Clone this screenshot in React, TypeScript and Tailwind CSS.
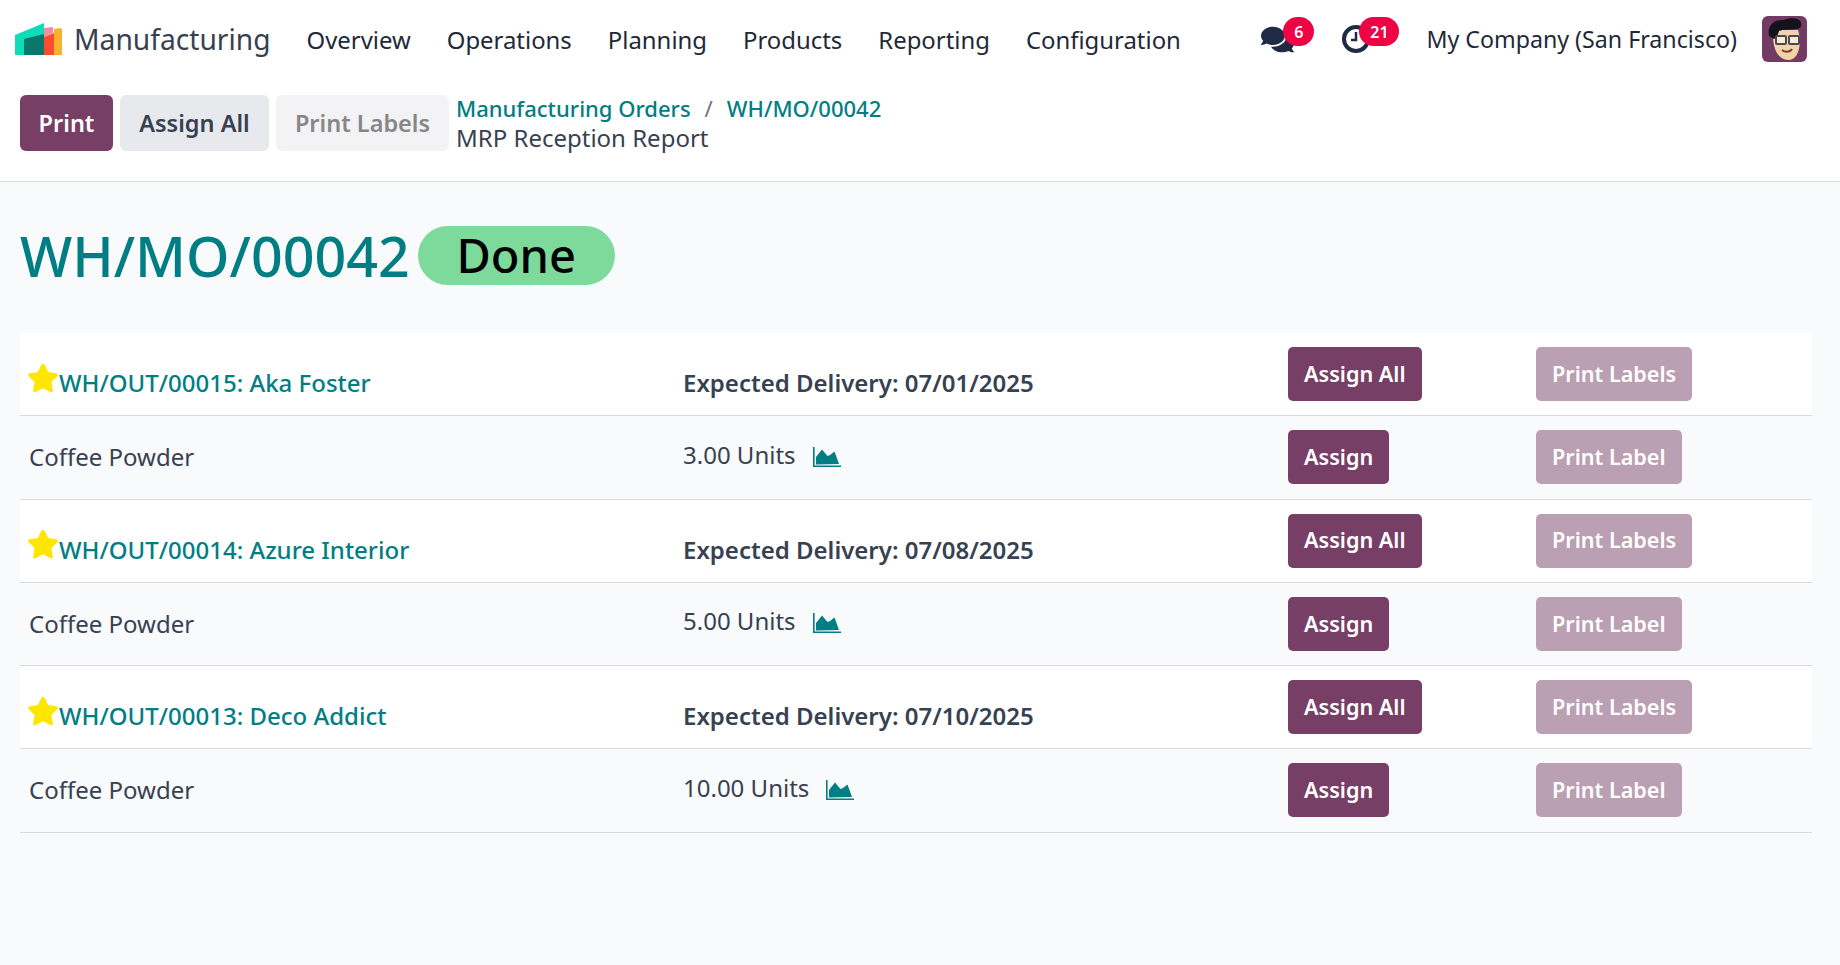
import { FaComments, FaStar } from 'react-icons/fa';

const font = "font-['Noto_Sans',sans-serif]";

const navItems = ['Overview', 'Operations', 'Planning', 'Products', 'Reporting', 'Configuration'];

const deliveries = [
  { ref: 'WH/OUT/00015: Aka Foster', date: '07/01/2025', qty: '3.00 Units' },
  { ref: 'WH/OUT/00014: Azure Interior', date: '07/08/2025', qty: '5.00 Units' },
  { ref: 'WH/OUT/00013: Deco Addict', date: '07/10/2025', qty: '10.00 Units' },
];

function Logo() {
  return (
    <svg width="48" height="32" viewBox="0 0 48 32" className="shrink-0">
      <path d="M39 6l6 -1c1 0 2 1 2 2v25h-8z" fill="#fbb130" />
      <path d="M29 5l9 -1v6l-9 4z" fill="#f98aa0" />
      <path d="M29 14l10 -4v22h-10z" fill="#fb4d2e" />
      <path d="M0 12L29 0v32H0z" fill="#0cdcb8" />
      <path d="M9 16l20 -5v21H9z" fill="#07786a" />
    </svg>
  );
}

function ClockIcon() {
  return (
    <svg width="30" height="30" viewBox="0 0 30 30" fill="none" stroke="#1f2a44">
      <circle cx="15" cy="15" r="12" strokeWidth="4" />
      <path d="M15 8v8h-5" strokeWidth="2.5" />
    </svg>
  );
}

function AreaChartIcon() {
  return (
    <svg width="28" height="21" viewBox="0 0 28 21" className="shrink-0" fill="#017e84">
      <path d="M0 0h1.6v18.4H28V20H0z" />
      <path d="M3 17.5V10l6-7.5 5.5 6.5 2.5-1 4.5-3.5 4.5 12.5z" />
    </svg>
  );
}

function Avatar() {
  return (
    <svg width="45" height="46" viewBox="0 0 45 46" className="rounded-md shrink-0">
      <rect width="45" height="46" fill="#723a64" />
      <path d="M11 20c0 14 6 24 15 24s12-10 12-22l-2-8H14z" fill="#f2d3a8" />
      <path d="M7 20C5 10 12 3 22 4c6-3 17-2 17 3 1 3-1 6-4 6-6 1-14 0-18 2l-2 6-3 2z" fill="#14121a" />
      <rect x="14" y="20" width="10" height="8" rx="1" fill="#f7ead6" stroke="#4a4a54" strokeWidth="2" />
      <rect x="27" y="20" width="10" height="8" rx="1" fill="#f7ead6" stroke="#4a4a54" strokeWidth="2" />
      <path d="M20 34c3 2.5 8 2.5 10-1" stroke="#7d3b38" strokeWidth="2" fill="none" />
    </svg>
  );
}

function RowButtons({ primary, secondary }: { primary: string; secondary: string }) {
  return (
    <>
      <div className="w-[248px] pl-[9px]">
        <button className="h-[54px] px-[16px] rounded-[5px] bg-[#783f66] text-white text-[21.6px] font-semibold">{primary}</button>
      </div>
      <div className="pl-[9px]">
        <button className="h-[54px] px-[16px] rounded-[5px] bg-[#bb9fb2] text-white text-[21.6px] font-semibold">{secondary}</button>
      </div>
    </>
  );
}

export default function App() {
  return (
    <div className={`${font} min-h-[965px] bg-[#f9fafb] text-[#374151]`}>
      <header className="bg-white h-[78px] flex items-center pl-[15px] pr-[33px]">
        <Logo />
        <span className="ml-[11px] text-[28.2px] text-[#374151]">Manufacturing</span>
        <nav className="ml-[36px] pt-[1px] flex gap-[36px] text-[23.9px] text-[#1f2937]">
          {navItems.map((item) => (
            <span key={item}>{item}</span>
          ))}
        </nav>
        <div className="ml-auto flex items-center">
          <div className="relative w-[80px] h-[40px] flex items-center">
            <FaComments className="w-[33px] h-[33px] text-[#1f2a44]" />
            <span className="absolute left-[22px] -top-[2px] w-[31px] h-[29px] rounded-full bg-[#ee0344] text-white text-[16px] font-semibold flex items-center justify-center">6</span>
          </div>
          <div className="relative w-[85px] h-[40px] flex items-center">
            <ClockIcon />
            <span className="absolute left-[18px] -top-[2px] w-[40px] h-[29px] rounded-full bg-[#ee0344] text-white text-[16px] font-semibold flex items-center justify-center">21</span>
          </div>
          <span className="text-[23.2px] text-[#1f2937] mr-[25px]">My Company (San Francisco)</span>
          <Avatar />
        </div>
      </header>

      <div className="bg-white h-[104px] border-b border-[#d8dadd] pt-[17px] pl-[20px] flex gap-[7px]">
        <button className="h-[56px] w-[93px] pt-[1px] rounded-[6px] bg-[#783f66] text-white text-[23.5px] font-semibold">Print</button>
        <button className="h-[56px] w-[149px] pt-[1px] rounded-[6px] bg-[#e7e9ed] text-[#374151] text-[23.5px] font-semibold">Assign All</button>
        <button className="h-[56px] w-[173px] pt-[1px] rounded-[6px] bg-[#f3f3f5] text-[#878787] text-[23.5px] font-semibold">Print Labels</button>
        <div className="-mt-[2px] leading-[30px]">
          <div className="flex items-center text-[22px]">
            <span className="text-[#017e84] font-medium">Manufacturing Orders</span>
            <span className="mx-[14px] text-[#6b7280]">/</span>
            <span className="text-[#017e84] font-medium">WH/MO/00042</span>
          </div>
          <div className="text-[24px]">MRP Reception Report</div>
        </div>
      </div>

      <main className="px-[20px] pr-[28px] pt-[44px]">
        <div className="flex items-center gap-[8px] h-[59px]">
          <h1 className="text-[55.5px] leading-[59px] font-medium text-[#017e84]">WH/MO/00042</h1>
          <span className="h-[59px] w-[197px] rounded-full bg-[#7dda9b] text-black text-[47px] leading-[59px] font-medium text-center">Done</span>
        </div>

        <div className="mt-[48px]">
          {deliveries.map((d) => (
            <div key={d.ref}>
              <div className="bg-white h-[83px] border-b border-[#d8dadd] flex items-center">
                <div className="w-[654px] pl-[7px] flex items-center pt-[18px] text-[24px] font-medium text-[#017e84]">
                  <FaStar className="w-[32px] h-[32px] text-[#ffe600] -mt-[11px] shrink-0" />
                  <span>{d.ref}</span>
                </div>
                <div className="w-[605px] pl-[9px] pt-[18px] text-[24px] font-semibold">Expected Delivery: {d.date}</div>
                <RowButtons primary="Assign All" secondary="Print Labels" />
              </div>
              <div className="h-[83.5px] border-b border-[#d8dadd] flex items-center">
                <div className="w-[654px] pl-[9px] text-[24px]">Coffee Powder</div>
                <div className="w-[605px] pl-[9px] flex items-center gap-[17px] text-[24px]">
                  <span className="-mt-[5px]">{d.qty}</span>
                  <AreaChartIcon />
                </div>
                <RowButtons primary="Assign" secondary="Print Label" />
              </div>
            </div>
          ))}
        </div>
      </main>
    </div>
  );
}
